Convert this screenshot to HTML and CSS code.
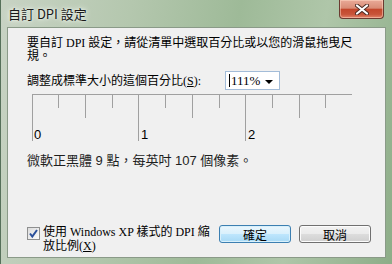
FILE: index.html
```html
<!DOCTYPE html>
<html lang="zh-Hant">
<head>
    <meta charset="UTF-8">
    <title>自訂 DPI 設定</title>
    <link rel="stylesheet" href="styles.css">
</head>
<body>
    <div class="window">
        <!-- Title bar -->
        <div class="titlebar">
            <span class="title">自訂 DPI 設定</span>
            <button class="close-btn" aria-label="關閉">
                <svg width="14" height="11" viewBox="0 0 14 11">
                    <path d="M2 1.5 L12 9.5 M12 1.5 L2 9.5" stroke="#4a2a22" stroke-width="4" stroke-linecap="round"/>
                    <path d="M2 1.5 L12 9.5 M12 1.5 L2 9.5" stroke="#ffffff" stroke-width="2.2" stroke-linecap="round"/>
                </svg>
            </button>
        </div>

        <!-- Dialog body -->
        <div class="client">
            <p class="intro">要自訂 DPI 設定，請從清單中選取百分比或以您的滑鼠拖曳尺規。</p>

            <div class="scale-row">
                <label class="scale-label">調整成標準大小的這個百分比(<u>S</u>):</label>
                <div class="combo">
                    <span class="caret"></span><span class="combo-value">111%</span>
                    <span class="arrow"></span>
                </div>
            </div>

            <svg class="ruler" width="320" height="48" viewBox="0 0 320 48">
                <g stroke="#a0a0a0" stroke-width="1">
                    <line x1="0" y1="0.5" x2="320" y2="0.5"/>
                    <line x1="0.5" y1="0" x2="0.5" y2="47"/>
                    <line x1="26.5" y1="0" x2="26.5" y2="14"/>
                    <line x1="53.5" y1="0" x2="53.5" y2="24"/>
                    <line x1="80.5" y1="0" x2="80.5" y2="14"/>
                    <line x1="106.5" y1="0" x2="106.5" y2="47"/>
                    <line x1="133.5" y1="0" x2="133.5" y2="14"/>
                    <line x1="160.5" y1="0" x2="160.5" y2="24"/>
                    <line x1="187.5" y1="0" x2="187.5" y2="14"/>
                    <line x1="213.5" y1="0" x2="213.5" y2="47"/>
                    <line x1="240.5" y1="0" x2="240.5" y2="14"/>
                    <line x1="267.5" y1="0" x2="267.5" y2="24"/>
                    <line x1="293.5" y1="0" x2="293.5" y2="14"/>
                </g>
                <g class="ruler-num">
                    <text x="2" y="45">0</text>
                    <text x="109" y="45">1</text>
                    <text x="216" y="45">2</text>
                </g>
            </svg>

            <p class="font-info">微軟正黑體 9 點，每英吋 107 個像素。</p>

            <div class="bottom-row">
                <label class="xp-check">
                    <span class="check-box">
                        <svg width="11" height="11" viewBox="0 0 11 11">
                            <path d="M2 5.5 L4.3 8.5 L9 2" fill="none" stroke="#2a4f9a" stroke-width="2"/>
                        </svg>
                    </span>
                    <span class="check-text">使用 Windows XP 樣式的 DPI 縮<br>放比例(<u>X</u>)</span>
                </label>
                <button class="btn btn-default">確定</button>
                <button class="btn">取消</button>
            </div>
        </div>
    </div>
</body>
</html>
```

FILE: styles.css
```css
body {
    margin: 0;
    padding: 0;
    font-family: "Liberation Serif", "Noto Sans CJK TC", serif;
    font-size: 12px;
    color: #000;
}

.window {
    width: 392px;
    height: 264px;
    display: flex;
    flex-direction: column;
    box-sizing: border-box;
    border-left: 1px solid #56705a;
    background: linear-gradient(100deg, #c8d3c4 0%, #b4c7ae 30%, #9eba98 55%, #afc6a9 75%, #8dad88 100%);
}

.titlebar {
    height: 27px;
    display: flex;
    align-items: flex-start;
    flex-shrink: 0;
}

.title {
    margin: 6px 0 0 7px;
    font-family: "Noto Sans CJK TC", sans-serif;
    font-size: 13px;
    line-height: 15px;
    color: #1a1a1a;
    text-shadow: 0 0 6px #f4f8f2, 0 0 3px #f4f8f2;
}

.close-btn {
    margin-left: auto;
    margin-right: 8px;
    width: 45px;
    height: 19px;
    padding: 0;
    border: 1px solid #6b3a30;
    border-top: none;
    border-radius: 0 0 4px 4px;
    background: linear-gradient(#e9aa98 0%, #d98c76 45%, #c3472c 52%, #c8553a 80%, #e3846a 100%);
    box-shadow: inset 0 0 0 1px rgba(255, 220, 200, 0.5);
    display: flex;
    align-items: center;
    justify-content: center;
}

.client {
    flex: 1;
    margin: 0 6px 6px 6px;
    border: 1px solid #8a9a88;
    background-color: #f0f0f0;
    padding: 9px 0 0 19px;
    display: flex;
    flex-direction: column;
}

.intro {
    margin: 0;
    width: 334px;
    line-height: 13px;
}

.scale-row {
    display: flex;
    align-items: center;
    margin-top: 8px;
}

.scale-label {
    width: 198px;
    line-height: 14px;
}

.combo {
    width: 55px;
    height: 19px;
    box-sizing: border-box;
    border: 1px solid #a3bcd8;
    background: #fff;
    display: flex;
    align-items: center;
    padding-left: 3px;
    position: relative;
}

.caret {
    width: 1px;
    height: 13px;
    background: #000;
}

.combo-value {
    margin-left: 1px;
    font-size: 13px;
}

.arrow {
    position: absolute;
    right: 6px;
    top: 8px;
    border-left: 4px solid transparent;
    border-right: 4px solid transparent;
    border-top: 4px solid #000;
}

.ruler {
    display: block;
    margin: 4px 0 0 5px;
}

.ruler-num {
    font-family: "Liberation Sans", sans-serif;
    font-size: 13px;
    fill: #000;
}

.font-info {
    margin: 10px 0 0 0;
    font-family: "Liberation Sans", "Noto Sans CJK TC", sans-serif;
    font-size: 13px;
    line-height: 17px;
    color: #1e1e1e;
}

.bottom-row {
    display: flex;
    align-items: flex-start;
    margin-top: auto;
    margin-bottom: 4px;
}

.xp-check {
    display: flex;
    align-items: flex-start;
    width: 184px;
}

.check-box {
    width: 11px;
    height: 11px;
    margin-top: 2px;
    border: 1px solid #8e8f8f;
    background: linear-gradient(135deg, #dcdcdc, #fbfbfb);
    display: flex;
    align-items: center;
    justify-content: center;
    flex-shrink: 0;
}

.check-text {
    margin-left: 3px;
    width: 172px;
    line-height: 14px;
}

.btn {
    width: 72px;
    height: 18px;
    padding: 0;
    margin-left: 8px;
    border: 1px solid #707070;
    border-radius: 3px;
    font-family: "Liberation Serif", "Noto Sans CJK TC", serif;
    font-size: 12px;
    color: #000;
    background: linear-gradient(#f2f2f2 0%, #ebebeb 49%, #dddddd 50%, #cfcfcf 100%);
    box-shadow: inset 0 0 0 1px #fcfcfc;
}

.btn-default {
    border-color: #3c7fb1;
    background: linear-gradient(#eaf6fd 0%, #d9f0fc 49%, #bee6fd 50%, #a7d9f5 100%);
    box-shadow: inset 0 0 0 1px #d8f0fb;
}
```
